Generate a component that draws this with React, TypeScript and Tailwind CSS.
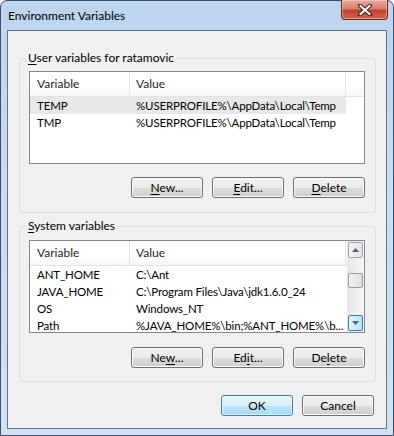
import React from "react"

const userVars = [
  { name: "TEMP", value: "%USERPROFILE%\\AppData\\Local\\Temp", selected: true },
  { name: "TMP", value: "%USERPROFILE%\\AppData\\Local\\Temp" },
]

const systemVars = [
  { name: "ANT_HOME", value: "C:\\Ant" },
  { name: "JAVA_HOME", value: "C:\\Program Files\\Java\\jdk1.6.0_24" },
  { name: "OS", value: "Windows_NT" },
  { name: "Path", value: "%JAVA_HOME%\\bin;%ANT_HOME%\\b..." },
]

// classic Win7 push button
function Button({ children, primary }: { children: React.ReactNode; primary?: boolean }) {
  return (
    <button
      className={
        primary
          ? "h-[21px] w-[72px] rounded-[3px] border border-[#3c7fb1] bg-[linear-gradient(to_bottom,#eaf6fd_0%,#d9f0fc_50%,#bee6fd_50%,#a7d9f5_100%)] text-[12px] leading-none text-black shadow-[inset_0_0_0_1px_#e6f4fc]"
          : "h-[21px] w-[72px] rounded-[3px] border border-[#707070] bg-[linear-gradient(to_bottom,#f2f2f2_0%,#ebebeb_50%,#dddddd_50%,#cfcfcf_100%)] text-[12px] leading-none text-black shadow-[inset_0_0_0_1px_#fbfbfb]"
      }
    >
      {children}
    </button>
  )
}

function Header() {
  return (
    <div className="flex h-[25px] shrink-0 border-b border-[#e3e3e3] bg-[linear-gradient(to_bottom,#ffffff_0%,#ffffff_60%,#f6f7f8_100%)] text-[#1e1e1e]">
      <div className="flex w-[100px] items-center border-r border-[#e3e5e8] pl-[7px]">Variable</div>
      <div className="flex w-[216px] items-center border-r border-[#e3e5e8] pl-[6px]">Value</div>
      <div className="flex-1" />
    </div>
  )
}

function Rows({ items }: { items: { name: string; value: string; selected?: boolean }[] }) {
  return (
    <>
      {items.map((v, i) => (
        <div
          key={i}
          className={`flex h-[17px] w-[316px] shrink-0 items-center text-[11.5px] tracking-[-0.15px] ${v.selected ? "bg-[#e8e8e8]" : ""}`}
        >
          <div className="w-[100px] pl-[7px] whitespace-nowrap">{v.name}</div>
          <div className="w-[216px] overflow-hidden pl-[6px] whitespace-nowrap">{v.value}</div>
        </div>
      ))}
    </>
  )
}

function Arrow({ up }: { up?: boolean }) {
  return (
    <svg width="7" height="4" viewBox="0 0 7 4">
      <path d={up ? "M0 4 L3.5 0 L7 4 Z" : "M0 0 L3.5 4 L7 0 Z"} fill="#4d6185" />
    </svg>
  )
}

function ScrollBar() {
  return (
    <div className="flex w-[17px] shrink-0 flex-col bg-[linear-gradient(to_right,#e6e6e6,#f7f7f7)] p-[1px]">
      <div className="flex h-[16px] items-center justify-center rounded-[2px] border border-[#a3a3a3] bg-[linear-gradient(to_right,#f4f4f4,#e3e3e3)]">
        <Arrow up />
      </div>
      <div className="h-[15px]" />
      <div className="h-[15px] rounded-[2px] border border-[#9c9c9c] bg-[linear-gradient(to_right,#f4f4f4,#dedede)]" />
      <div className="flex-1" />
      <div className="flex h-[16px] items-center justify-center rounded-[2px] border border-[#3c7fb1] bg-[linear-gradient(to_right,#e3f4fc,#b6e0f8)]">
        <Arrow />
      </div>
    </div>
  )
}

function Group({ label, mt, children }: { label: React.ReactNode; mt: string; children: React.ReactNode }) {
  return (
    <fieldset className={`${mt} rounded-[3px] border border-[#d5dfe5] pl-[9px] pr-[10px]`}>
      <legend className="ml-[-3px] px-[2px] leading-[16px]">{label}</legend>
      {children}
    </fieldset>
  )
}

export default function App() {
  return (
    <div className="relative flex h-[436px] w-[394px] flex-col rounded-t-[7px] border border-[#3f4f63] bg-[linear-gradient(to_bottom,#bcd4ee_0%,#c7dcf2_40%,#cfe2f5_100%)] font-['Lato',sans-serif] text-[12px] text-black">
      {/* title bar */}
      <div className="flex h-[29px] shrink-0 items-center pl-[7px]">Environment Variables</div>
      <div className="absolute right-[5px] top-[-1px] flex h-[20px] w-[47px] items-center justify-center rounded-b-[4px] border border-t-0 border-[#6c2a22] bg-[linear-gradient(to_bottom,#e9a99b_0%,#d98070_45%,#c0402b_55%,#d4694e_100%)] shadow-[inset_0_0_0_1px_rgba(255,255,255,0.35)]">
        <svg width="14" height="12" viewBox="0 0 14 12">
          <path d="M2 1.5 L12 10.5 M12 1.5 L2 10.5" stroke="#4a1a14" strokeWidth="4" strokeLinecap="square" />
          <path d="M2.5 2 L11.5 10 M11.5 2 L2.5 10" stroke="#ffffff" strokeWidth="2.2" strokeLinecap="square" />
        </svg>
      </div>

      {/* client area */}
      <div className="mx-[6px] mb-[6px] flex flex-1 flex-col border border-[#61758c] bg-[#f0f0f0] pl-[11px] pr-[10px]">
        <Group
          mt="mt-[19px]"
          label={
            <>
              <span className="underline underline-offset-2">U</span>ser variables for ratamovic
            </>
          }
        >
          <div className="mt-[5px] flex h-[93px] flex-col border border-[#828790] bg-white">
            <Header />
            <Rows items={userVars} />
          </div>
          <div className="mt-[13px] flex justify-end gap-[9px] pb-[14px]">
            <Button><span className="underline underline-offset-2">N</span>ew...</Button>
            <Button><span className="underline underline-offset-2">E</span>dit...</Button>
            <Button><span className="underline underline-offset-2">D</span>elete</Button>
          </div>
        </Group>

        <Group
          mt="mt-[5px]"
          label={
            <>
              <span className="underline underline-offset-2">S</span>ystem variables
            </>
          }
        >
          <div className="mt-[6px] flex h-[93px] border border-[#828790] bg-white">
            <div className="flex min-w-0 flex-1 flex-col overflow-hidden">
              <Header />
              <Rows items={systemVars} />
            </div>
            <ScrollBar />
          </div>
          <div className="mt-[14px] flex justify-end gap-[9px] pb-[13px]">
            <Button>Ne<span className="underline underline-offset-2">w</span>...</Button>
            <Button>Ed<span className="underline underline-offset-2">i</span>t...</Button>
            <Button>De<span className="underline underline-offset-2">l</span>ete</Button>
          </div>
        </Group>

        <div className="mt-[13px] flex justify-end gap-[9px] pr-[2px]">
          <Button primary>OK</Button>
          <Button>Cancel</Button>
        </div>
      </div>
    </div>
  )
}
